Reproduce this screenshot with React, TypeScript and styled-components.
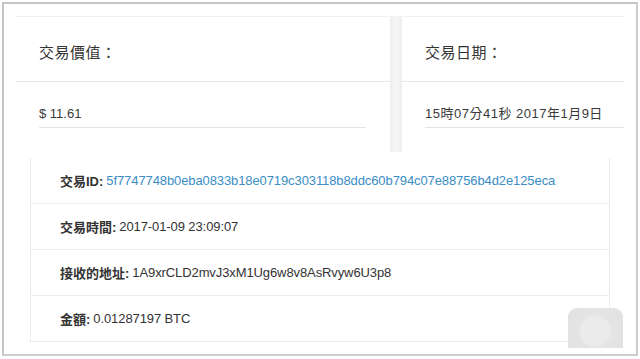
import styled, { createGlobalStyle } from "styled-components";

const GlobalStyle = createGlobalStyle`
  html, body {
    margin: 0;
    padding: 0;
    background: #fff;
  }
  body {
    font-family: "Liberation Sans", "Noto Sans CJK TC", sans-serif;
  }
`

const Frame = styled.div`
  position: relative;
  box-sizing: border-box;
  margin: 2px 0 0 2px;
  width: 636px;
  height: 354px;
  border: 2px solid #cdcdcd;
  border-top-color: #c6c6c6;
  border-left-color: #c6c6c6;
  background: #fff;
  overflow: hidden;
  display: flex;
  flex-direction: column;
`

const CardsRow = styled.div`
  display: flex;
  padding: 12px 0 0 12px;
  height: 136px;
  flex-shrink: 0;
`

const Card = styled.div<{ $width: number }>`
  width: ${p => p.$width}px;
  background: #fff;
  border-top: 1px solid #f1f1f1;
  display: flex;
  flex-direction: column;
`

const Gutter = styled.div`
  width: 12px;
  background: linear-gradient(to right, #eeeeee, #f6f6f6 50%, #eeeeee);
`

const CardHeader = styled.div`
  height: 65px;
  box-sizing: border-box;
  padding: 4px 23px 0;
  display: flex;
  align-items: center;
  border-bottom: 1px solid #e6e6e6;
  font-size: 15px;
  color: #333;
  letter-spacing: 0.5px;
`

const CardBody = styled.div<{ $flush?: boolean }>`
  padding: 23px ${p => (p.$flush ? 0 : 24)}px 0 23px;
`

const Field = styled.div<{ $spacing?: number }>`
  font-size: 13px;
  line-height: 18px;
  color: #3a3a3a;
  letter-spacing: ${p => p.$spacing ?? 0}px;
  padding-bottom: 4px;
  border-bottom: 1px solid #e3e3e3;
`

const DetailSection = styled.div`
  flex: 1;
  background: #fff;
  padding: 6px 0 0 26px;
`

const DetailList = styled.div`
  width: 580px;
  box-sizing: border-box;
  border: 1px solid #ebebeb;
  border-top: none;
`

const Row = styled.div`
  height: 45px;
  display: flex;
  align-items: center;
  padding-left: 29px;
  font-size: 13px;
  color: #333;
  & + & {
    border-top: 1px solid #ececec;
  }
`

const Label = styled.b`
  font-weight: 700;
  margin-right: 3px;
`

const Value = styled.span<{ $link?: boolean }>`
  color: ${p => (p.$link ? "#3b8dc4" : "#333")};
  letter-spacing: -0.1px;
`

const ScrollButton = styled.div`
  position: absolute;
  left: 564px;
  top: 304px;
  width: 55px;
  height: 40px;
  border-radius: 9px 9px 0 0;
  background: radial-gradient(circle at 27px 23px, #ebebeb 0, #ebebeb 14px, #e4e4e4 17px, #e1e1e1 100%);
`

const details = [
  { label: "交易ID:", value: "5f7747748b0eba0833b18e0719c303118b8ddc60b794c07e88756b4d2e125eca", link: true },
  { label: "交易時間:", value: "2017-01-09 23:09:07" },
  { label: "接收的地址:", value: "1A9xrCLD2mvJ3xM1Ug6w8v8AsRvyw6U3p8" },
  { label: "金額:", value: "0.01287197 BTC" },
]

export default function App() {
  return (
    <>
      <GlobalStyle />
      <Frame>
        <CardsRow>
          <Card $width={374}>
            <CardHeader>交易價值：</CardHeader>
            <CardBody>
              <Field>$ 11.61</Field>
            </CardBody>
          </Card>
          <Gutter />
          <Card $width={222}>
            <CardHeader>交易日期：</CardHeader>
            <CardBody $flush>
              <Field $spacing={0.5}>15時07分41秒 2017年1月9日</Field>
            </CardBody>
          </Card>
        </CardsRow>
        <DetailSection>
          <DetailList>
            {details.map(d => (
              <Row key={d.label}>
                <Label>{d.label}</Label>
                <Value $link={d.link}>{d.value}</Value>
              </Row>
            ))}
          </DetailList>
        </DetailSection>
        <ScrollButton />
      </Frame>
    </>
  );
}
